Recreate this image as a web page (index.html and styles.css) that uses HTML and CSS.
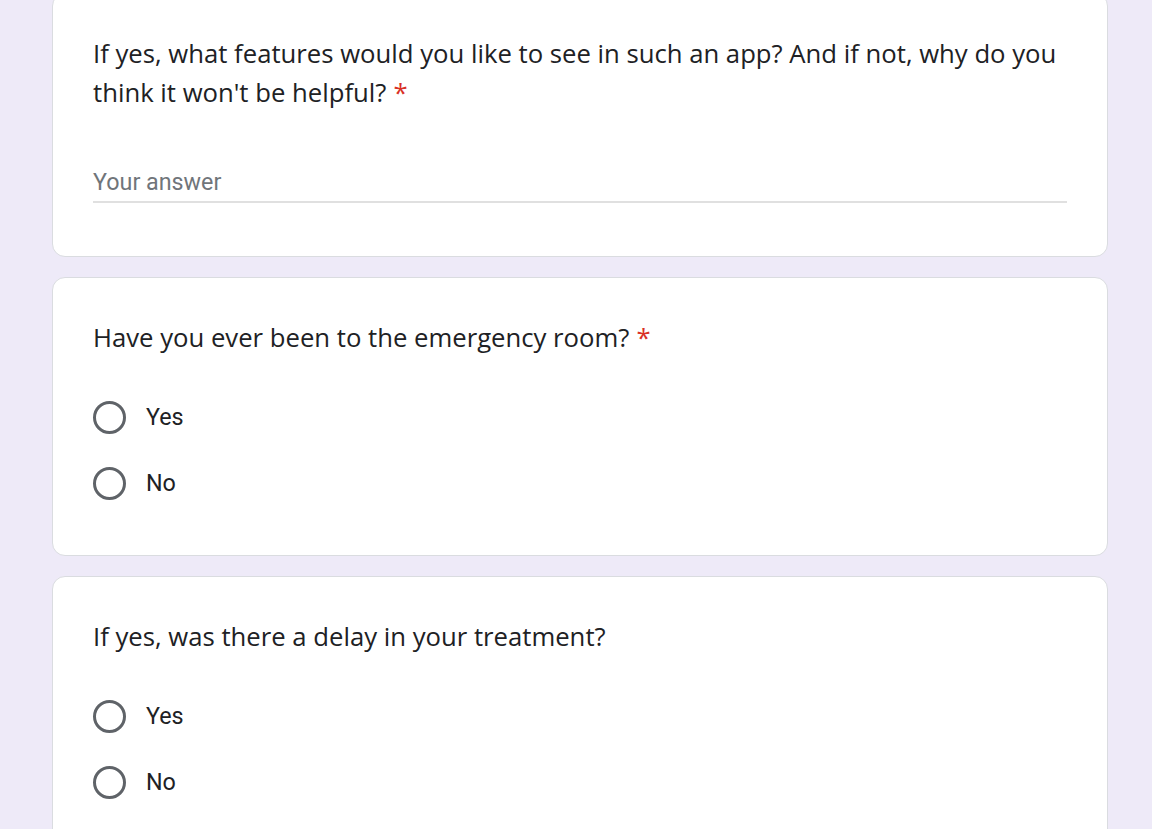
FILE: index.html
```html
<!DOCTYPE html>
<html lang="en">
<head>
<meta charset="utf-8">
<title>Form</title>
<link rel="stylesheet" href="styles.css">
</head>
<body>
<main class="form">
  <section class="card card-first">
    <div class="title">If yes, what features would you like to see in such an app? And if not, why do you think it won't be helpful?<span class="req">*</span></div>
    <div class="input"><span class="placeholder">Your answer</span></div>
  </section>
  <section class="card">
    <div class="title">Have you ever been to the emergency room?<span class="req">*</span></div>
    <div class="options">
      <div class="option"><span class="radio"></span><span class="label">Yes</span></div>
      <div class="option"><span class="radio"></span><span class="label">No</span></div>
    </div>
  </section>
  <section class="card">
    <div class="title">If yes, was there a delay in your treatment?</div>
    <div class="options">
      <div class="option"><span class="radio"></span><span class="label">Yes</span></div>
      <div class="option"><span class="radio"></span><span class="label">No</span></div>
    </div>
  </section>
</main>
</body>
</html>
```
FILE: styles.css
```css
html, body {
  margin: 0;
  padding: 0;
}
body {
  background: #eeeaf8;
  overflow: hidden;
}
.form {
  display: flex;
  flex-direction: column;
  gap: 20px;
  width: 1056px;
  margin-left: 52px;
}
.card {
  background: #fff;
  border: 1px solid #dadce0;
  border-radius: 13px;
  padding: 40px 40px 39px 40px;
}
.card-first {
  margin-top: -7px;
}
.title {
  font-family: "Open Sans", sans-serif;
  font-size: 25.7px;
  line-height: 39px;
  color: #202124;
}
.req {
  display: inline-block;
  color: #d93025;
  margin-left: 7px;
  line-height: 1;
}
.input {
  margin-top: 50px;
  height: 39px;
  border-bottom: 2px solid #e0e0e0;
  margin-bottom: 14px;
  display: flex;
  align-items: center;
}
.placeholder {
  font-family: Roboto, sans-serif;
  font-size: 23.3px;
  color: #70757a;
}
.options {
  margin-top: 27px;
  display: flex;
  flex-direction: column;
}
.option {
  height: 66px;
  display: flex;
  align-items: center;
  gap: 20px;
}
.radio {
  width: 27px;
  height: 27px;
  border: 3px solid #5f6368;
  border-radius: 50%;
  flex: none;
}
.label {
  font-family: Roboto, sans-serif;
  font-size: 23.3px;
  color: #202124;
}
```
